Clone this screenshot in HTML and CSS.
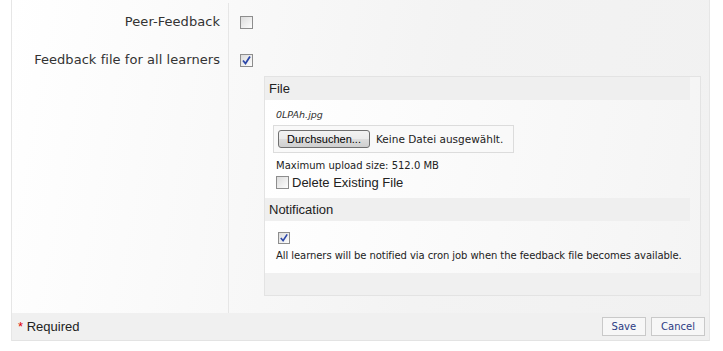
FILE: index.html
```html
<!DOCTYPE html>
<html lang="de">
<head>
    <meta charset="UTF-8">
    <title>Feedback</title>
    <link rel="stylesheet" href="styles.css">
</head>
<body>
    <div class="form">
        <div class="form-body">
            <div class="label">Peer-Feedback</div>
            <div class="field">
                <span class="cb"></span>
            </div>

            <div class="label">Feedback file for all learners</div>
            <div class="field field-last">
                <span class="cb checked">
                    <svg width="11" height="11" viewBox="0 0 11 11"><path d="M2 5.5 L4.5 8.5 L9 1.5" fill="none" stroke="#2b46a8" stroke-width="1.8"/></svg>
                </span>

                <!-- вложенная панель -->
                <div class="sub">
                    <div class="sub-head">File</div>
                    <div class="sub-content">
                        <div class="filename">0LPAh.jpg</div>
                        <div class="file-box">
                            <span class="browse">Durchsuchen...</span>
                            <span class="no-file">Keine Datei ausgewählt.</span>
                        </div>
                        <div class="info">Maximum upload size: 512.0 MB</div>
                        <label class="delete">
                            <span class="cb"></span>
                            Delete Existing File
                        </label>
                    </div>
                    <div class="sub-head">Notification</div>
                    <div class="sub-content notify">
                        <span class="cb checked small">
                            <svg width="10" height="10" viewBox="0 0 11 11"><path d="M2 5.5 L4.5 8.5 L9 1.5" fill="none" stroke="#2b46a8" stroke-width="1.8"/></svg>
                        </span>
                        <div class="info">All learners will be notified via cron job when the feedback file becomes available.</div>
                    </div>
                    <div class="sub-foot"></div>
                </div>
            </div>
        </div>

        <div class="form-foot">
            <div class="required"><span class="star">*</span> Required</div>
            <div class="buttons">
                <button type="button">Save</button>
                <button type="button">Cancel</button>
            </div>
        </div>
    </div>
</body>
</html>
```

FILE: styles.css
```css
body {
    margin: 0;
    padding: 0;
    background-color: #ffffff;
    font-family: "DejaVu Sans", Verdana, sans-serif;
    color: #333;
}
.form {
    margin: 0 13px 0 11px;
    border-left: 1px solid #e6e6e6;
    border-right: 1px solid #e6e6e6;
    background: linear-gradient(100deg, #ffffff 0%, #f3f3f3 60%, #f1f1f1 100%);
}
.form-body {
    display: grid;
    grid-template-columns: 217px 1fr;
    padding-top: 3px;
}
.label {
    border-right: 1px solid #e6e6e6;
    text-align: right;
    padding: 12px 8px 12px 0;
    font-size: 13px;
    line-height: 14px;
    min-height: 14px;
    letter-spacing: 0.05px;
}
.field {
    padding: 13px 8px 11px 11px;
}
.field-last {
    padding-bottom: 17px;
}
.cb {
    display: block;
    width: 11px;
    height: 11px;
    border: 1px solid #8d8d8d;
    background: linear-gradient(135deg, #dcdcdc, #fdfdfd);
    position: relative;
}
.cb svg {
    position: absolute;
    left: 0;
    top: 0;
}
.cb.small {
    width: 10px;
    height: 10px;
}
.sub {
    margin: 9px 0 0 24px;
    border: 1px solid #e3e3e3;
    padding-right: 10px;
    background: linear-gradient(100deg, #ffffff, #f4f4f4);
}
.sub-head {
    background-color: #efefef;
    font-family: "Liberation Sans", Arial, sans-serif;
    font-size: 13px;
    color: #222;
    height: 23px;
    line-height: 23px;
    padding-left: 4px;
}
.sub-content {
    padding: 8px 0 8px 11px;
}
.filename {
    font-style: italic;
    font-size: 9.5px;
    line-height: 14px;
    margin-bottom: 3px;
}
.file-box {
    display: inline-flex;
    align-items: center;
    gap: 6px;
    border: 1px solid #dcdcdc;
    background-color: #f9f9f9;
    padding: 4px;
    margin-left: -3px;
    width: 231px;
    height: 18px;
    white-space: nowrap;
}
.browse {
    display: inline-block;
    border: 1px solid #707070;
    border-radius: 3px;
    background: linear-gradient(#f2f2f2, #ebebeb 50%, #dddddd 51%, #cfcfcf);
    font-family: "Liberation Sans", Arial, sans-serif;
    font-size: 11px;
    color: #000;
    height: 16px;
    line-height: 16px;
    padding: 0 8px;
}
.no-file {
    font-size: 10.5px;
    color: #222;
}
.info {
    font-size: 10px;
    color: #222;
    line-height: 14px;
    margin-top: 6px;
}
.delete {
    display: flex;
    align-items: center;
    gap: 3px;
    font-family: "Liberation Sans", Arial, sans-serif;
    font-size: 13px;
    color: #222;
    margin-top: 2px;
}
.notify {
    padding-top: 11px;
    padding-bottom: 10px;
}
.notify .cb {
    margin-left: 2px;
}
.notify .info {
    margin-top: 5px;
    letter-spacing: -0.07px;
}
.sub-foot {
    height: 22px;
    background-color: #f0f0f0;
    margin-right: -10px;
}
.form-foot {
    display: flex;
    justify-content: space-between;
    align-items: center;
    background-color: #f0f0f0;
    border-bottom: 1px solid #e3e3e3;
    height: 27px;
    padding: 0 4px 0 6px;
}
.required {
    font-family: "Liberation Sans", Arial, sans-serif;
    font-size: 13px;
    color: #222;
}
.star {
    color: #e00000;
}
.buttons {
    display: flex;
    gap: 5px;
}
.buttons button {
    font-family: "DejaVu Sans", Verdana, sans-serif;
    font-size: 10px;
    color: #2c3c84;
    background-color: #f7f7f7;
    border: 1px solid #c9c9c9;
    height: 19px;
    padding: 0 9px;
    cursor: pointer;
}
```
